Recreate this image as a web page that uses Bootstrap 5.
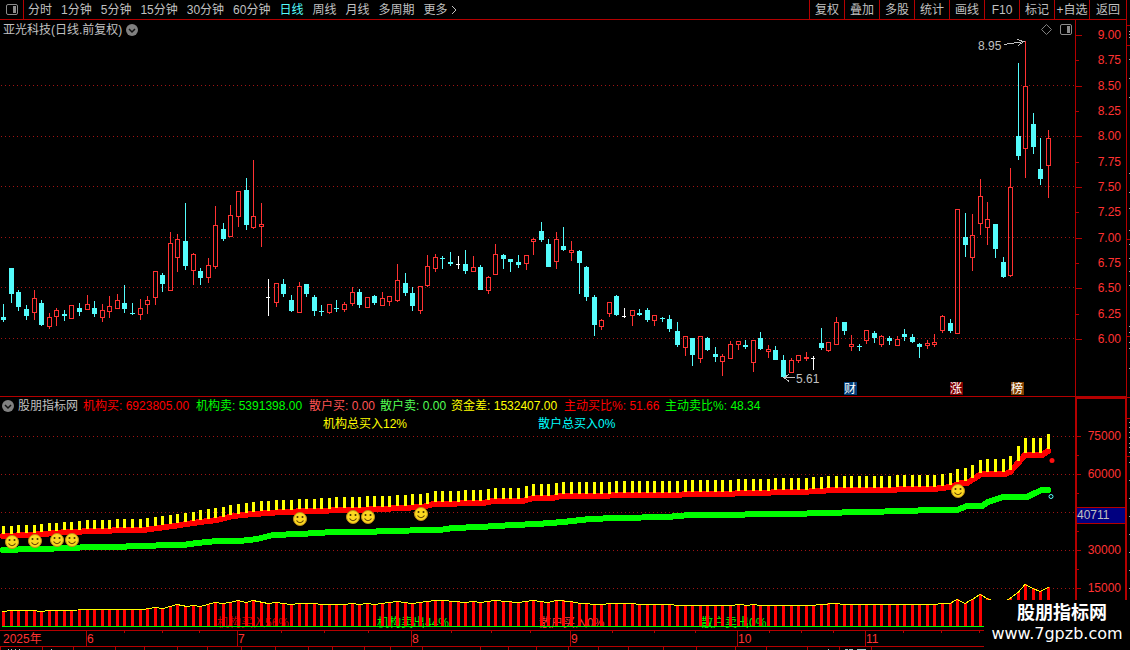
<!DOCTYPE html>
<html lang="zh-CN" data-bs-theme="dark">
<head>
<meta charset="utf-8">
<meta name="viewport" content="width=device-width, initial-scale=1">
<title>亚光科技 日线</title>
<link href="https://cdn.jsdelivr.net/npm/bootstrap@5.3.0/dist/css/bootstrap.min.css" rel="stylesheet">
<style>
:root{--line:#b40000;--up:#ff3232;--txt:#c0c0c0}
body{background:#000;color:var(--txt);font:12px/16px "Liberation Sans","Noto Sans CJK SC",sans-serif;overflow:hidden}
button{background:none;border:0;padding:0;color:inherit;font:inherit;white-space:nowrap}
svg{display:block}
.topbar{height:20px;border-bottom:1px solid var(--line)}
.layout-btn{width:24px;border:1px solid var(--line);border-width:0 1px 0 0}
.periods{gap:9px;padding-left:4px}
.periods .active{color:#54fcfc}
.tools button{width:35px;border-left:1px solid var(--line)}
.tools button:last-child{width:37px}
.frame{border-right:1px solid var(--line)}
.title-row{height:19px;padding:0 3px}
.panel-row{border-bottom:1px solid var(--line)}
.axis{width:51px;border-left:1px solid var(--line);color:var(--up)}
.axis ol{list-style:none;margin:0;padding:0 5px 0 0}
.axis li{position:relative;line-height:12px;text-align:right}
.axis li::before{content:"";position:absolute;left:0;top:6px;width:3px;height:1px;background:var(--line)}
.axis li.major::before{width:6px}
.price-list{height:316px;margin-top:9px!important}
.sub-axis{width:51px;border:2px solid var(--line);border-bottom:0;border-right-width:1px}
.value-list{margin-top:28px!important;padding-right:4px!important}
.axis .value-list li{height:19px;line-height:19px}
.axis .value-list li::before{top:9px;width:2px}
.axis .value-list li.major::before{width:4px}
.cursor-value{position:absolute;left:0;right:-4px;top:4px;background:#000080;border:1px solid var(--line);border-width:1px 0;color:var(--txt);text-align:left;line-height:15px}
.legend-row{height:18px;padding-left:2px;gap:5px;white-space:nowrap}
.legend-row button{margin-right:-1px}
.legend-long{min-width:108px}.legend-short{min-width:66px}.legend-ratio{min-width:96px}
.c-red{color:#ff0000}.c-green{color:#00ff00}.c-pink{color:#ff5454}.c-lime{color:#54ff54}.c-yellow{color:#ffff00}
.site-mark{width:146px;height:50px;background:#000;color:#fff;font-family:"DejaVu Sans","Noto Sans CJK SC",sans-serif}
.site-name{font:bold 18px/27px "Liberation Sans","Noto Sans CJK SC",sans-serif;padding-left:10px}
.site-url{display:block;font-size:16px;line-height:14px;color:#fff;text-decoration:none}
.plot text{font-family:"Liberation Sans","Noto Sans CJK SC",sans-serif;font-size:12px}
.side-strip{width:3px}
</style>
</head>
<body>
<div class="d-flex vh-100 position-relative">
  <div class="flex-grow-1 d-flex flex-column frame" style="min-width:0">
    <nav class="topbar d-flex flex-shrink-0" aria-label="周期">
      <button class="layout-btn d-flex align-items-center justify-content-center" aria-label="侧栏">
        <svg width="12" height="11" viewBox="0 0 12 11"><rect x=".5" y=".5" width="11" height="10" rx="1.5" fill="none" stroke="#8c8c8c"/><rect x="7" y="2" width="3" height="7" fill="#8c8c8c"/></svg>
      </button>
      <div class="periods d-flex flex-grow-1 align-items-center">
        <button>分时</button><button>1分钟</button><button>5分钟</button><button>15分钟</button><button>30分钟</button><button>60分钟</button><button class="active">日线</button><button>周线</button><button>月线</button><button>多周期</button>
        <button class="d-flex align-items-center">更多<svg width="10" height="10" viewBox="0 0 10 10"><path d="M4 1l4 4-4 4" fill="none" stroke="#c0c0c0"/></svg></button>
      </div>
      <div class="tools d-flex">
        <button>复权</button><button>叠加</button><button>多股</button><button>统计</button><button>画线</button><button>F10</button><button>标记</button><button>+自选</button><button>返回</button>
      </div>
    </nav>

    <section class="panel-row d-flex flex-shrink-0">
      <div class="flex-grow-1" style="min-width:0">
        <div class="title-row d-flex align-items-center gap-1">
          <span>亚光科技(日线.前复权)</span>
          <button aria-label="展开"><svg width="12" height="12" viewBox="0 0 12 12"><circle cx="6" cy="6" r="6" fill="#808080"/><path d="M3 5l3 3 3-3" fill="none" stroke="#111" stroke-width="1.5"/></svg></button>
          <span class="flex-grow-1"></span>
          <svg width="11" height="11" viewBox="0 0 11 11"><path d="M5.500 .5l5 5-5 5-5-5z" fill="none" stroke="#808080"/></svg>
          <svg class="ms-1" width="12" height="11" viewBox="0 0 12 11"><rect x=".5" y=".5" width="11" height="10" rx="1.500" fill="none" stroke="#8c8c8c"/><rect x="7" y="2" width="3" height="7" fill="#8c8c8c"/></svg>
        </div>
        <svg id="price" class="plot w-100" height="357" role="img" aria-label="日K线"></svg>
      </div>
      <div class="axis flex-shrink-0"><ol class="price-list d-flex flex-column justify-content-between">
        <li class="major">9.00</li><li>8.75</li><li class="major">8.50</li><li>8.25</li><li class="major">8.00</li><li>7.75</li><li class="major">7.50</li><li>7.25</li><li class="major">7.00</li><li>6.75</li><li class="major">6.50</li><li>6.25</li><li class="major">6.00</li>
      </ol></div>
    </section>

    <section class="d-flex flex-shrink-0">
      <div class="flex-grow-1" style="min-width:0">
        <div class="legend-row d-flex align-items-center">
          <button aria-label="指标菜单"><svg width="12" height="12" viewBox="0 0 12 12"><circle cx="6" cy="6" r="6" fill="#808080"/><path d="M3 5l3 3 3-3" fill="none" stroke="#111" stroke-width="1.5"/></svg></button>
          <span>股朋指标网</span>
          <span class="legend-long c-red">机构买: 6923805.00</span>
          <span class="legend-long c-green">机构卖: 5391398.00</span>
          <span class="legend-short c-pink">散户买: 0.00</span>
          <span class="legend-short c-lime">散户卖: 0.00</span>
          <span class="legend-long c-yellow">资金差: 1532407.00</span>
          <span class="legend-ratio c-red">主动买比%: 51.66</span>
          <span class="legend-ratio c-green">主动卖比%: 48.34</span>
        </div>
        <svg id="flow" class="plot w-100" height="215" role="img" aria-label="资金指标"></svg>
      </div>
      <div class="axis sub-axis flex-shrink-0"><ol class="value-list">
        <li class="major">75000</li><li></li><li class="major">60000</li><li></li><li><span class="cursor-value">40711</span></li><li></li><li class="major">30000</li><li></li><li class="major">15000</li>
      </ol></div>
    </section>
    <svg id="time" class="plot w-100 flex-shrink-0" height="20" role="img" aria-label="时间轴"></svg>
  </div>
  <svg id="strip" class="side-strip flex-shrink-0" height="650" aria-hidden="true"></svg>
  <div class="site-mark position-absolute bottom-0 end-0 text-center">
    <div class="site-name">股朋指标网</div>
    <a class="site-url" href="#">www.7gpzb.com</a>
  </div>
</div>

<script src="https://cdn.jsdelivr.net/npm/bootstrap@5.3.0/dist/js/bootstrap.bundle.min.js"></script>
<script>
// One candle per entry: direction, then high, body top, body bottom, low.
const candles = `d304,317,320,322 d268,268,294,303 d290,292,307,311 d305,309,316,320 u290,298,313,320 d300,303,325,326 u313,317,327,329 u308,310,317,326 d310,314,316,321 u305,305,319,319
d303,308,312,316 u295,304,310,310 d301,308,314,317 u304,310,318,322 u296,306,312,318 u294,300,309,309 d285,303,309,313 d303,313,314,315 u299,308,315,320 u296,300,305,314
u271,271,298,305 d273,275,284,292 u232,243,291,291 u234,239,258,272 d203,241,266,270 u253,254,271,285 d268,271,278,285 u258,265,278,283 u206,225,267,269 d223,229,239,241
u205,215,237,237 u191,191,217,227 d178,190,225,230 u160,216,228,229 u203,224,227,247 w279,297,298,316 u283,283,303,307 d279,284,294,297 d295,300,311,312 u282,286,313,313
d284,284,294,297 d295,297,311,316 d305,311,312,316 u304,304,313,314 d300,308,309,312 u302,304,310,312 u287,292,304,306 d289,292,305,308 u297,297,308,308 d295,296,303,305
u292,298,306,306 u296,296,302,306 u264,280,301,302 d273,283,293,296 d287,293,306,311 u286,286,311,314 u255,266,286,287 u254,257,269,272 d256,258,259,269 d252,262,264,266
w256,264,265,269 d250,264,271,274 u256,267,272,272 d265,267,290,290 u276,277,291,294 u244,254,275,275 d254,255,259,269 d259,259,262,272 d255,262,265,268 u255,255,264,270
u238,239,242,255 d222,231,240,242 d239,244,267,267 u232,239,262,269 d227,246,250,251 u241,250,253,261 d250,251,263,294 d266,267,297,301 d295,297,325,336 u319,320,327,330
u302,302,314,317 d295,296,315,316 w308,316,317,318 u310,310,316,326 d309,313,315,316 d308,310,320,322 u315,315,321,326 d317,318,319,322 d315,319,329,332 d322,331,345,347
u336,336,348,356 d338,338,355,366 u336,336,359,363 d337,338,350,351 d347,354,357,362 u354,356,362,376 u341,344,359,359 u341,341,345,350 d340,345,347,349 u340,340,363,372
d332,338,349,350 u345,349,352,358 d346,350,360,360 d355,360,377,377 u358,360,373,373 u355,355,361,363 u352,357,359,361 w356,358,359,370 d328,343,348,350 u342,342,351,352
u317,322,345,345 d322,322,331,335 u335,344,347,351 d344,346,347,351 u330,330,341,344 d331,333,338,343 u335,336,345,347 d336,338,341,345 u336,339,346,346 d329,334,337,341
d334,337,342,343 d343,344,347,358 u340,343,346,349 u334,342,345,347 u315,316,331,333 d319,323,331,333 u209,209,334,334 d213,237,245,257 u214,235,258,271 u179,196,224,235
u202,219,228,245 d224,224,249,258 d257,262,277,278 u168,187,276,277 d63,136,156,160 u41,86,149,178 d113,124,147,154 d138,169,179,185 u130,138,166,198`
  .split(/\s+/).map(s => [s[0], ...s.slice(1).split(',').map(Number)]);

const buy = [[3,536],[30,535],[67,532],[127,530],[143,530],[173,526],[200,522],[217,520],[233,516],[253,514],[283,512],[310,511],[350,510],[383,509],[400,508],[423,507],[433,504],[483,503],[493,501],[523,501],[533,498],[553,498],[560,496],[603,496],[617,495],[677,495],[687,494],[727,494],[743,493],[800,492],[835,490],[893,490],[900,489],[935,489],[940,488],[952,487],[959,483],[967,483],[975,478],[981,474],[1005,474],[1010,472],[1018,463],[1025,455],[1042,455],[1048,451]];
const sell = [[3,550],[33,549],[77,548],[83,547],[123,547],[130,546],[183,545],[197,543],[217,541],[240,541],[257,539],[273,535],[300,534],[333,532],[373,532],[380,531],[440,530],[453,528],[480,527],[513,525],[537,524],[563,522],[590,519],[617,518],[667,517],[690,515],[740,515],[750,514],[790,514],[860,512],[910,511],[927,510],[957,510],[967,506],[982,506],[988,502],[1003,497],[1027,497],[1033,494],[1042,490],[1048,490]];
const net = [[3,611],[11,610],[33,610],[41,611],[50,610],[106,609],[143,609],[155,607],[163,608],[177,604],[187,606],[193,605],[200,606],[215,602],[223,603],[230,602],[238,600],[246,602],[253,600],[268,603],[276,602],[291,604],[299,603],[314,603],[321,604],[344,604],[352,603],[359,604],[367,603],[374,604],[397,601],[412,603],[435,600],[443,600],[465,602],[473,601],[480,602],[495,600],[518,602],[533,600],[548,602],[556,600],[571,601],[580,603],[600,604],[613,603],[632,603],[640,604],[670,604],[677,605],[730,605],[740,604],[747,605],[753,604],[760,605],[813,605],[820,604],[836,603],[844,604],[935,604],[942,603],[950,603],[957,599],[965,603],[972,599],[980,594],[987,598],[995,601],[1003,602],[1010,598],[1018,592],[1025,584],[1033,588],[1040,591],[1048,587]];
const faces = [[12,542],[35,541],[57,540],[72,540],[300,519],[353,517],[368,517],[421,514],[958,491]];
const months = [['6',86],['7',237],['8',411],['9',570],['10',737],['11',865]];
const minor = [124,162,199,281,324,368,451,491,530,612,654,695,769,801,833,903,941,979];
const cells = [0,42,73,115,144,177,207,241,275,308,332,364,390,422,480,508,536,568,598,628,663,696,735,766,807,839,871];

const at = (pts, x) => {
  for (let i = 1; i < pts.length; i++) if (x <= pts[i][0]) {
    const [a, b] = [pts[i - 1], pts[i]];
    return b[1] - (b[1] - a[1]) * (b[0] - x) / (b[0] - a[0]);
  }
  return pts[pts.length - 1][1];
};
const rect = (x, y, w, h, f) => `<rect x="${x}" y="${y}" width="${w}" height="${h}" fill="${f}"/>`;
const label = (x, y, t, f) => `<text x="${x}" y="${y}" fill="${f}">${t}</text>`;
const grid = (w, ys) => ys.map(y => `<path d="M1 ${y + .5}H${w}" stroke="#a01414" stroke-dasharray="1 3"/>`).join('');

function draw() {
  const price = document.getElementById('price'), flow = document.getElementById('flow'), time = document.getElementById('time');
  const w = price.clientWidth, k = w / 1075, X = v => Math.round(v * k), bar = i => X(3.3 + i * 7.57);

  let s = grid(w, [85,136,186,237,287,338]);
  candles.forEach(([t, hi, top, bot, lo], i) => {
    const x = bar(i), c = { u: '#ff3232', d: '#54fcfc', w: '#fff' }[t];
    if (t === 'u') {
      s += rect(x, hi, 1, top - hi, c) + rect(x, bot, 1, lo - bot, c);
      s += `<rect x="${x - 1.5}" y="${top + .5}" width="4" height="${bot - top - 1}" fill="none" stroke="${c}"/>`;
    } else s += rect(x, hi, 1, lo - hi, c) + rect(x - 2, top, t === 'd' ? 5 : 4, bot - top, c);
  });
  s += label(X(978), 50, '8.95', '#c0c0c0') + `<path d="M${X(1004)} 44.500L${X(1024)} 41.500m-7 -2l7 2-6 4" fill="none" stroke="#c0c0c0"/>`;
  s += label(X(796), 383, '5.61', '#c0c0c0') + `<path d="M${X(795)} 377.500H${X(784)}m5-3l-5 3 5 4" fill="none" stroke="#c0c0c0"/>`;
  [['财',844,'#003c78'],['涨',950,'#800000'],['榜',1011,'#804000']].forEach(([t, x, f]) => s += rect(X(x), 382, 13, 13, f) + label(X(x), 393, t, '#fff'));
  price.innerHTML = `<g transform="translate(0 -39)" shape-rendering="crispEdges">${s}</g>`;

  const line = (p, c, n, d = 0) => `<polyline points="${p.map(([x, y]) => X(x) + ',' + (y + d)).join(' ')}" fill="none" stroke="${c}" stroke-width="${n}" stroke-linecap="round" stroke-linejoin="round"/>`;
  s = grid(w, [436,474,512,550,588]);
  s += label(X(323), 428, '机构总买入12%', '#ffff00') + label(X(538), 428, '散户总买入0%', '#00ffff');
  s += label(X(217), 627, '机构买入56%', '#c80000') + label(X(377), 627, '机构卖出44%', '#00ff00') + label(X(539), 627, '散户买入0%', '#ff3c3c') + label(X(701), 627, '散户卖出0%', '#00ff00');
  s += line(buy, '#ff0000', 6) + line(sell, '#00ff00', 6);
  candles.forEach((_, i) => {
    const v = 3.3 + i * 7.57, y = Math.round(at(buy, v)) - 2, n = Math.round(at([[3,8],[150,9],[240,10],[400,11],[640,12],[950,12],[960,13],[1003,13],[1010,14],[1025,15]], v));
    const top = Math.round(at(net, v));
    s += rect(bar(i) - 1, y - n, 3, n, '#ffff00') + rect(bar(i) - 1, top, 3, 627 - top, '#ff0000');
  });
  s += line(net, '#ffff00', 1, .5) + rect(2, 626, w - 2, 1, '#00ff00');
  faces.forEach(([x, y]) => s += `<g transform="translate(${X(x)} ${y})" shape-rendering="auto"><circle r="6.500" fill="#fcd820" stroke="#c09018"/><circle cx="-2.500" cy="-2" r="1" fill="#403000"/><circle cx="2.500" cy="-2" r="1" fill="#403000"/><path d="M-3.500 1.500Q0 6 3.500 1.500" fill="none" stroke="#604000" stroke-width="1.200"/></g>`);
  s += `<g shape-rendering="auto"><circle cx="${X(1051.5)}" cy="460.500" r="2.500" fill="#ff1010"/><circle cx="${X(1051)}" cy="496.500" r="2" fill="none" stroke="#54fcfc"/></g>`;
  flow.innerHTML = `<g transform="translate(0 -415)" shape-rendering="crispEdges">${s}</g>`;

  const red = '#b40000', full = time.clientWidth;
  s = rect(0, 0, full, 1, red) + rect(0, 16, full, 1, red) + label(3, 13, '2025年', '#ff3232');
  months.forEach(([m, x]) => s += rect(X(x), 0, 1, 16, red) + label(X(x) + 1, 13, m, '#ff3232'));
  minor.forEach(x => s += rect(X(x), 0, 1, 3, red));
  cells.forEach(x => s += rect(X(x), 16, 1, 4, red));
  [[8,1],[11,1],[15,1],[19,1],[51,1],[828,1],[845,3],[849,4],[857,9]].forEach(([x, n]) => s += rect(X(x), 19, n, 1, '#a0c8c8'));
  time.innerHTML = `<g shape-rendering="crispEdges">${s}</g>`;

  document.getElementById('strip').innerHTML = [25,45,239,336,397,418,456].map(y => rect(0, y, 3, 1, red)).join('') +
    [31,34,37,59,78,97,173,192,208,230,244,258,271,285,326,332,342,348,368,422,427,432,437,443,447,452,462,480,498,516,534,552,570,588].map(y => rect(2, y, 1, 1, '#a0a0a0')).join('');
}
draw();
addEventListener('resize', draw);
</script>
</body>
</html>
